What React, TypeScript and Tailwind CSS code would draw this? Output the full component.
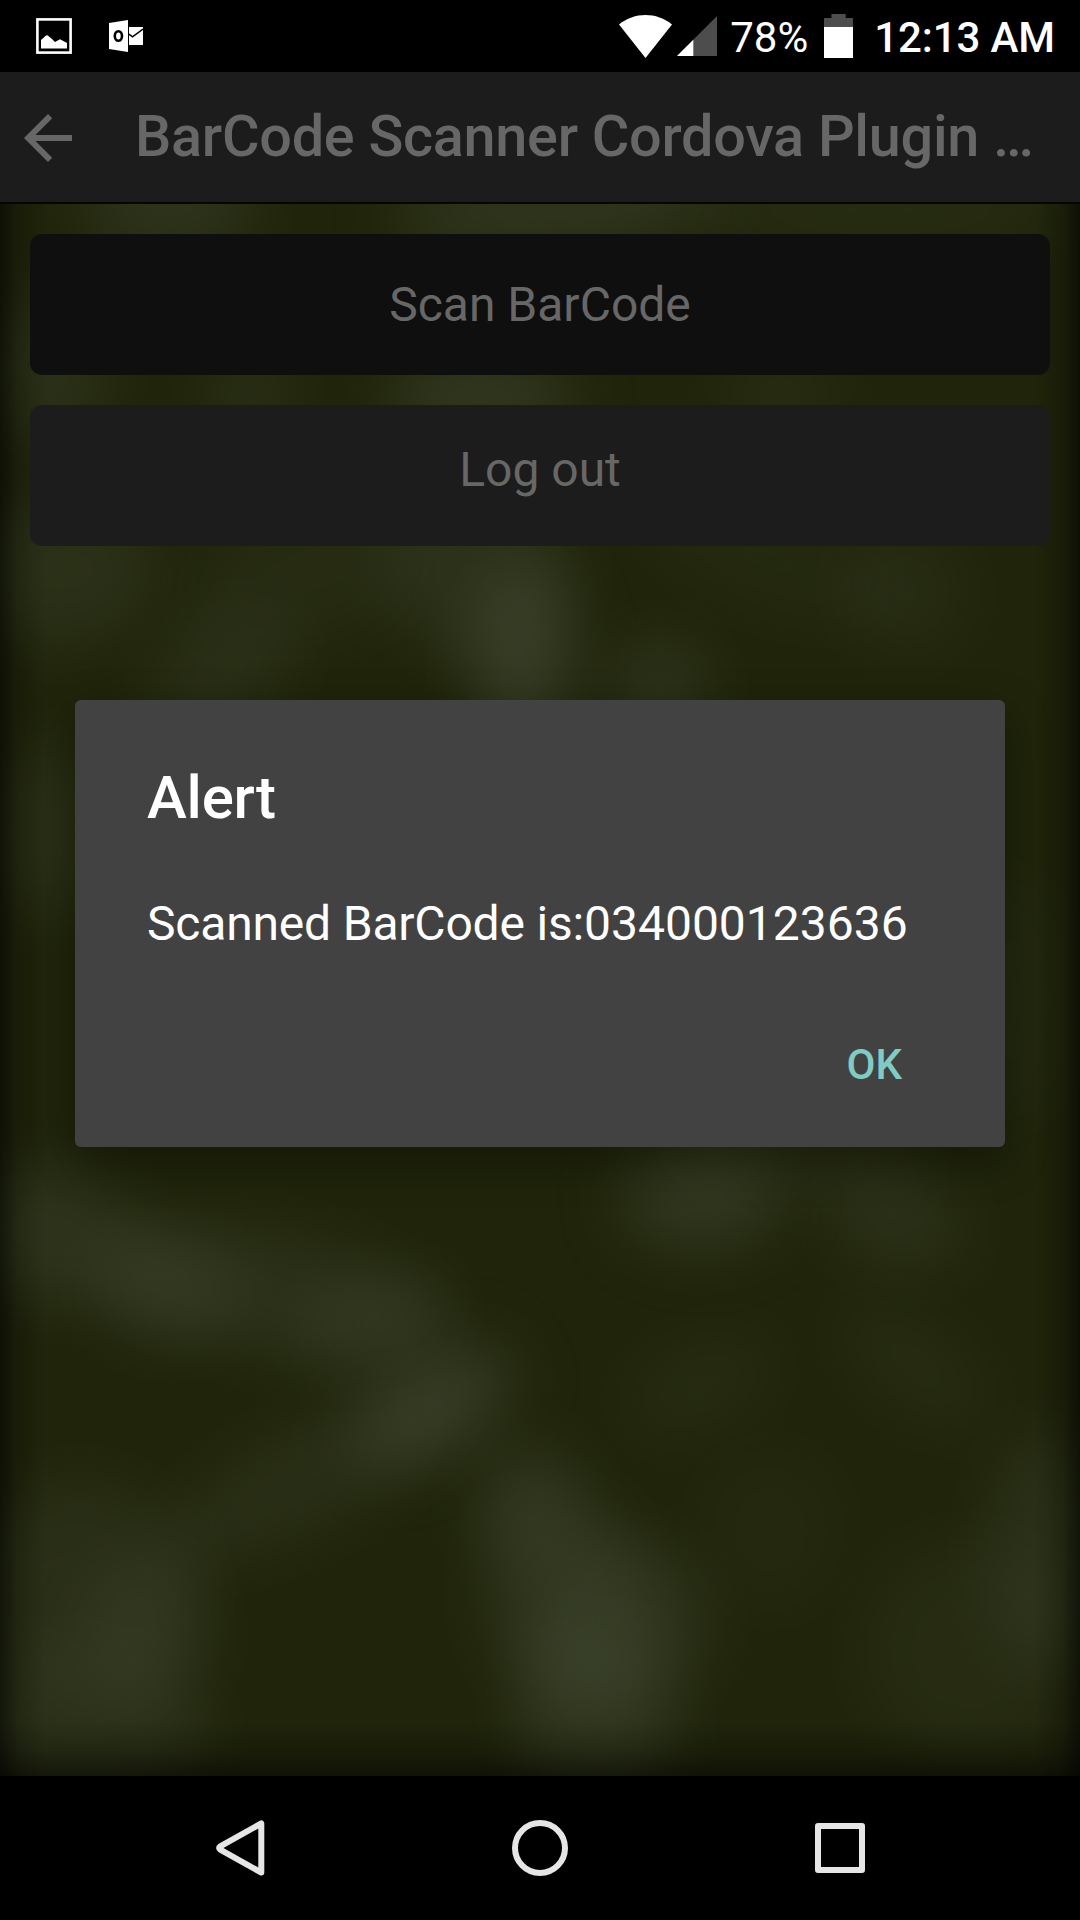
import React from "react";

type Blob = [number, number, number, number, number, number];

// cx, cy, rx, ry, rotation, opacity
const BLOBS: Blob[] = [
  [480, 575, 95, 85, 20, 0.36],
  [522, 655, 52, 90, 0, 0.62],
  [660, 690, 50, 55, 0, 0.42],
  [60, 570, 100, 75, 0, 0.34],
  [220, 670, 80, 50, -20, 0.3],
  [310, 570, 130, 70, -20, 0.2],
  [45, 830, 50, 90, 0, 0.32],
  [770, 560, 130, 50, 20, 0.15],
  [905, 590, 60, 65, -20, 0.22],
  [50, 1235, 105, 65, 15, 0.42],
  [165, 1290, 70, 52, 8, 0.4],
  [280, 1295, 170, 60, 12, 0.36],
  [375, 1320, 80, 38, -15, 0.36],
  [700, 1198, 80, 52, 0, 0.52],
  [800, 1160, 130, 40, 10, 0.22],
  [900, 1225, 70, 45, 10, 0.34],
  [435, 1405, 90, 44, -32, 0.6],
  [320, 1470, 180, 50, -28, 0.3],
  [528, 1505, 52, 62, 0, 0.46],
  [565, 1600, 80, 110, -8, 0.4],
  [620, 1625, 90, 85, -10, 0.42],
  [595, 1720, 80, 95, 0, 0.42],
  [145, 1635, 65, 75, 0, 0.36],
  [80, 1590, 120, 110, 0, 0.3],
  [70, 1730, 140, 80, 0, 0.32],
  [700, 1385, 80, 45, -25, 0.2],
  [915, 1365, 90, 40, 40, 0.22],
  [770, 1530, 70, 80, 0, 0.13],
  [1040, 1550, 50, 120, 0, 0.36],
  [970, 1650, 110, 110, 0, 0.2],
  [1010, 1000, 50, 130, 0, 0.12],
  [560, 205, 170, 45, -5, 0.5],
  [170, 205, 90, 50, 0, 0.45],
  [480, 400, 95, 50, 0, 0.52],
  [880, 210, 180, 45, 0, 0.22],
  [780, 395, 60, 40, 0, 0.25],
  [50, 370, 60, 80, 0, 0.35],
  [250, 395, 45, 40, 0, 0.35],
];

function Wallpaper() {
  return (
    <svg className="absolute inset-0 h-full w-full" viewBox="0 204 1080 1572" preserveAspectRatio="none" aria-hidden="true">
      <defs>
        <filter id="soft" x="-100%" y="-150%" width="300%" height="400%" colorInterpolationFilters="sRGB">
          <feGaussianBlur stdDeviation="31" />
        </filter>
        <linearGradient id="left" x1="0" x2="1" y1="0" y2="0">
          <stop offset="0" stopColor="#000" stopOpacity="0.55" />
          <stop offset="0.4" stopColor="#000" stopOpacity="0.2" />
          <stop offset="1" stopColor="#000" stopOpacity="0" />
        </linearGradient>
        <linearGradient id="right" x1="1" x2="0" y1="0" y2="0">
          <stop offset="0" stopColor="#000" stopOpacity="0.55" />
          <stop offset="0.4" stopColor="#000" stopOpacity="0.2" />
          <stop offset="1" stopColor="#000" stopOpacity="0" />
        </linearGradient>
        <linearGradient id="bottom" x1="0" x2="0" y1="1" y2="0">
          <stop offset="0" stopColor="#000" stopOpacity="0.5" />
          <stop offset="0.5" stopColor="#000" stopOpacity="0.18" />
          <stop offset="1" stopColor="#000" stopOpacity="0" />
        </linearGradient>
      </defs>
      <rect x="0" y="204" width="1080" height="1572" fill="#1f240a" />
      {BLOBS.map(([cx, cy, rx, ry, rot, op], i) => (
        <ellipse key={i} cx={cx} cy={cy} rx={rx} ry={ry} fill="#434a33" opacity={op} transform={`rotate(${rot} ${cx} ${cy})`} filter="url(#soft)" />
      ))}
      <rect x="0" y="204" width="45" height="1572" fill="url(#left)" />
      <rect x="1035" y="204" width="45" height="1572" fill="url(#right)" />
      <rect x="0" y="1721" width="1080" height="55" fill="url(#bottom)" />
    </svg>
  );
}

function StatusBar() {
  return (
    <div className="flex h-[72px] items-center justify-between bg-black pr-[25px] pl-9 text-[42px] leading-none text-white">
      <div className="flex items-center gap-[37px]">
        <svg width="36" height="36" viewBox="0 0 36 36">
          <rect x="1.4" y="1.4" width="33.2" height="33.2" fill="none" stroke="#fff" strokeWidth="2.6" />
          <path d="M5 22 L10 17.5 L11.5 17.2 L16 21 L19 24 L24 21.2 L31 25 V30.5 H5Z" fill="#fff" />
        </svg>
        <svg width="34" height="32" viewBox="0 0 34 32">
          <path d="M0 3 L19 0 V32 L0 29Z" fill="#fff" />
          <ellipse cx="9.4" cy="16" rx="3.6" ry="4.8" fill="none" stroke="#000" strokeWidth="2.6" />
          <path d="M20 7H34V25H20Z" fill="#fff" />
          <path d="M20 14.2 L23.5 16.8 L34 9" fill="none" stroke="#000" strokeWidth="1.5" />
        </svg>
      </div>
      <div className="flex items-center">
        <svg width="53" height="43" viewBox="0 0 53 43">
          <path d="M0 9.6 C15 -3.2 38 -3.2 53 9.6 L26.5 43Z" fill="#fff" />
        </svg>
        <svg className="ml-[5px]" width="40" height="40" viewBox="0 0 40 40">
          <path d="M40 0V40H0Z" fill="#4d4d4d" />
          <path d="M16.3 23.7V40H0Z" fill="#fff" />
        </svg>
        <span className="mt-1 ml-[13px]">78%</span>
        <svg className="ml-[16px]" width="29" height="44" viewBox="0 0 29 44">
          <path d="M7.4 0H21.7V4H29V13H0V4H7.4Z" fill="#4d4d4d" />
          <path d="M0 13H29V44H0Z" fill="#fff" />
        </svg>
        <span className="mt-1 ml-[21px] font-medium tracking-[-0.1px]">12:13 AM</span>
      </div>
    </div>
  );
}

function Header() {
  return (
    <header className="flex h-[132px] items-center border-b-2 border-[#050505] bg-[#1c1c1c] pl-3 text-[#676767]">
      <svg className="mt-0.5" width="72" height="72" viewBox="0 0 24 24" fill="currentColor">
        <path d="M20 11H7.83l5.59-5.59L12 4l-8 8 8 8 1.41-1.41L7.83 13H20v-2z" />
      </svg>
      <h1 className="ml-[51px] text-[57.6px] leading-[58px] font-medium tracking-[-0.28px] whitespace-nowrap">BarCode Scanner Cordova Plugin …</h1>
    </header>
  );
}

function Alert() {
  return (
    <div className="absolute inset-x-0 top-[72px] bottom-[144px] flex items-center justify-center">
      <section className="mb-px flex h-[447px] w-[930px] flex-col rounded-[6px] bg-[#424242] px-[72px] pt-[63px] text-white shadow-[0_14px_45px_rgba(0,0,0,0.3)]">
        <h2 className="text-[60px] leading-[70px] font-medium tracking-[-0.2px]">Alert</h2>
        <p className="mt-[63px] text-[48px] leading-[56px] tracking-[-0.19px] whitespace-nowrap">
          Scanned BarCode is:<span className="tracking-normal">034000123636</span>
        </p>
        <button className="mt-[88px] mr-[31px] self-end text-[42px] leading-[50px] font-medium text-[#80cbc4]">OK</button>
      </section>
    </div>
  );
}

function NavBar() {
  return (
    <nav className="flex h-36 items-center justify-between bg-black pr-[215px] pl-[216px]">
      <svg width="49" height="56" viewBox="0 0 49 56" fill="none" stroke="#e6e6e6" strokeWidth="6" strokeLinejoin="round">
        <path d="M45.3 3.4V52.6L4.2 29.6Q2 28 4.2 26.4Z" />
      </svg>
      <svg width="56" height="56" viewBox="0 0 56 56" fill="none" stroke="#e6e6e6" strokeWidth="6">
        <circle cx="28" cy="28" r="25" />
      </svg>
      <svg width="50" height="50" viewBox="0 0 50 50" fill="none" stroke="#e6e6e6" strokeWidth="6" strokeLinejoin="round">
        <rect x="3" y="3" width="44" height="44" />
      </svg>
    </nav>
  );
}

export default function App() {
  return (
    <div className="relative flex h-[1920px] w-[1080px] flex-col overflow-hidden bg-black font-['Roboto',sans-serif]">
      <StatusBar />
      <Header />
      <main className="relative flex-1 overflow-hidden">
        <Wallpaper />
        <div className="relative flex flex-col gap-[30px] p-[30px] text-[48px] leading-none text-[#676767]">
          <button className="flex h-[141px] items-center justify-center rounded-[12px] bg-[#0f0f0f]">Scan BarCode</button>
          <button className="flex h-[141px] items-center justify-center rounded-[12px] bg-[#1c1c1c] pb-[12px]">Log out</button>
        </div>
      </main>
      <NavBar />
      <Alert />
    </div>
  );
}
